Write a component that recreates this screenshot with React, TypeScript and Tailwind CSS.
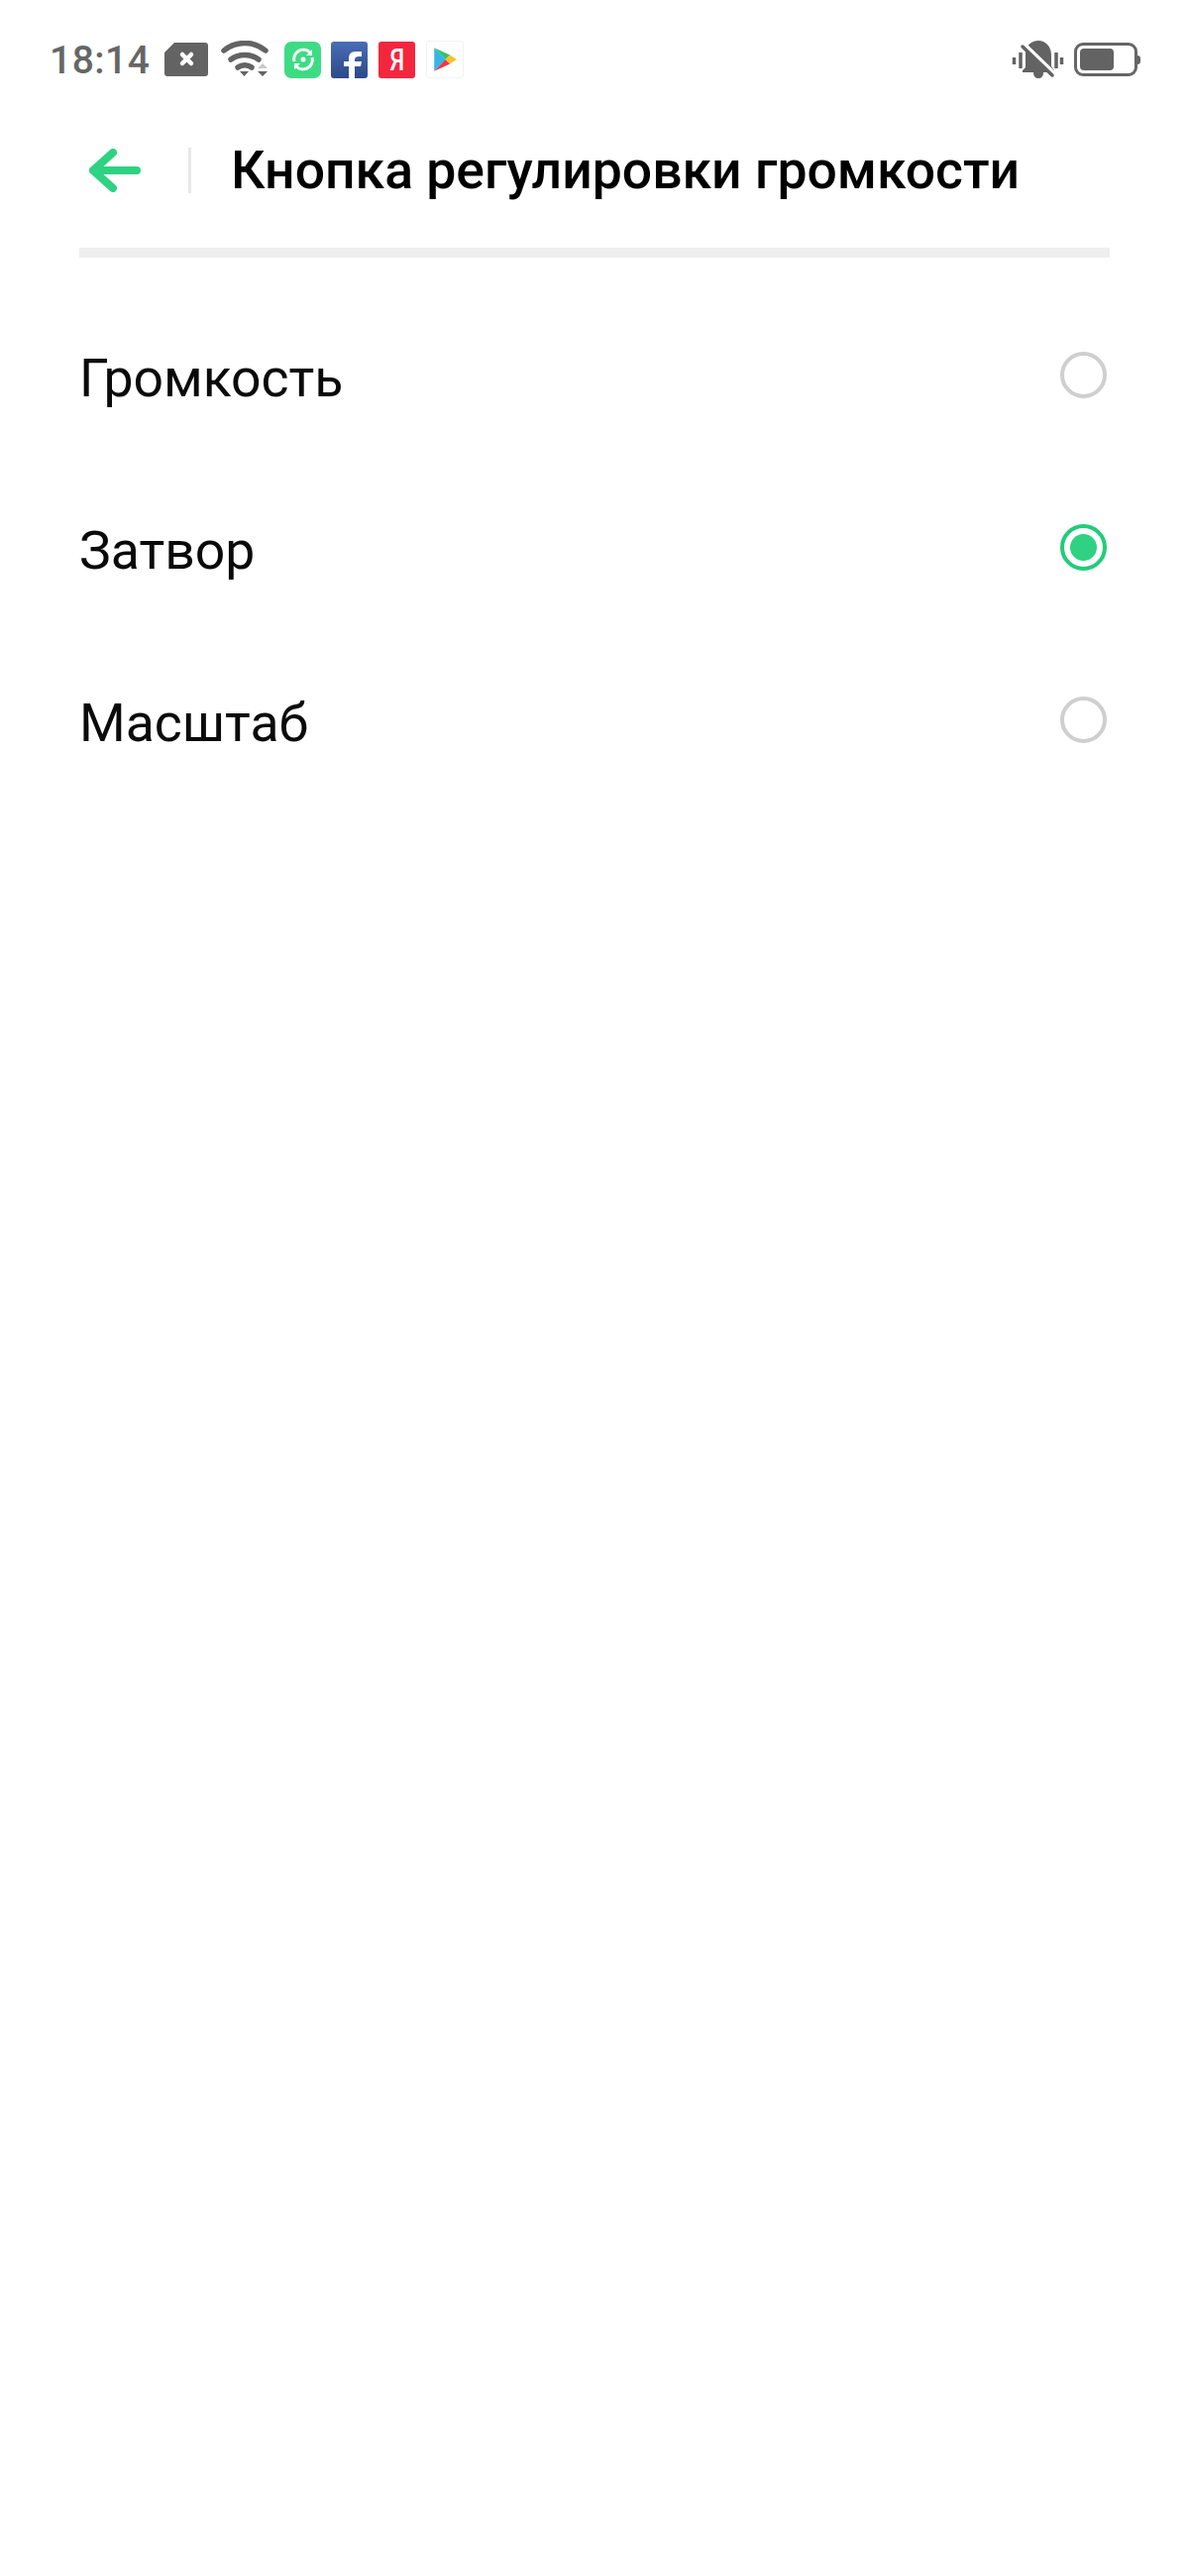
import React from 'react';

const font = { fontFamily: 'Roboto, "Noto Sans", sans-serif' };

const StatusBar = () => (
  <div className="flex h-[80px] items-center justify-between pl-[50px] pr-[49px] pt-[40px]">
    <div className="flex items-center">
      <span className="pt-[1px] text-[39px] leading-[42px] font-medium tracking-[0.5px] text-[#666666]">18:14</span>
      <svg width="44" height="34" viewBox="0 0 44 34" className="ml-[15px]">
        <path d="M10 0h31a3 3 0 0 1 3 3v28a3 3 0 0 1-3 3H3a3 3 0 0 1-3-3V10z" fill="#636363" />
        <path d="M18 12l9 9M27 12l-9 9" stroke="#fff" strokeWidth="4.5" strokeLinecap="round" />
      </svg>
      <svg width="48" height="38" viewBox="0 0 48 38" className="ml-[13px]">
        <g fill="none" stroke="#636363" strokeWidth="5.500" strokeLinecap="round">
          <path d="M3 10C15 0 33 0 45 10" />
          <path d="M10 19c8-6 20-6 28 0" />
          <path d="M17 27c4-3 10-3 14 0" />
        </g>
        <path d="M19 31h9l-4.500 5z" fill="#636363" />
        <path d="M37 28l5-5 5 5z" fill="#c8c8c8" />
        <path d="M37 31h10l-5 5z" fill="#636363" />
      </svg>
      <div className="ml-[16px] flex h-[37px] w-[37px] items-center justify-center rounded-[7px] bg-[#3ddc84]">
        <svg width="26" height="26" viewBox="0 0 26 26" fill="none">
          <path d="M4 15A9.500 9.500 0 0 1 20 6" stroke="#fff" strokeWidth="3" />
          <path d="M22 11A9.500 9.500 0 0 1 6 20" stroke="#fff" strokeWidth="3" />
          <path d="M22 3v6h-6zM4 23v-6h6z" fill="#fff" />
          <circle cx="13" cy="13" r="2.500" fill="#fff" />
        </svg>
      </div>
      <div className="ml-[10px] flex h-[37px] w-[37px] items-end justify-end overflow-hidden rounded-[3px] bg-gradient-to-b from-[#4a6db5] to-[#2c4a88] pr-[6px]">
        <svg width="18" height="27" viewBox="0 0 18 27">
          <path d="M5 27V15H0v-5h5V7c0-4 2-7 7-7h6v5h-3c-2 0-4 1-4 3v2h7l-1 5h-6v12z" fill="#fff" />
        </svg>
      </div>
      <div className="ml-[11px] flex h-[37px] w-[37px] items-center justify-center rounded-[3px] bg-[#f4263e] text-white">
        <span className="scale-x-75 text-[32px] leading-none font-medium">Я</span>
      </div>
      <div className="ml-[11px] flex h-[38px] w-[38px] items-center justify-center rounded-[3px] border border-[#f3f3f3] bg-white">
        <svg width="24" height="26" viewBox="0 0 21 23">
          <path d="M1 1v21l10-10.500z" fill="#36b5e8" />
          <path d="M1 1l10 10.500 4-4z" fill="#34c26e" />
          <path d="M1 22l10-10.500 4 4z" fill="#e8384a" />
          <path d="M15 7.500l6 4-6 4-4-4z" fill="#fbc02d" />
        </svg>
      </div>
    </div>
    <div className="flex items-center">
      <svg width="54" height="40" viewBox="0 0 54 40">
        <path d="M27 1c7 0 13 6 13 14v12l3 4v2H11v-2l3-3V14C14 6 20 1 27 1z" fill="#636363" />
        <path d="M22 33h10c0 4-2 6-5 6s-5-2-5-6z" fill="#636363" />
        <path d="M13 5l30 29" stroke="#fff" strokeWidth="4" />
        <path d="M11 7l30 29" stroke="#636363" strokeWidth="3.500" strokeLinecap="round" />
        <path d="M2.500 18v7M9 13v16M45 13v16M50.500 18v7" stroke="#636363" strokeWidth="3.500" />
      </svg>
      <div className="ml-[9px] flex items-center">
        <div className="flex h-[34px] w-[64px] items-center rounded-[9px] border-[3px] border-[#666666] p-[3px]">
          <div className="h-full w-[34px] rounded-[4px] bg-[#636363]" />
        </div>
        <div className="h-[9px] w-[3px] rounded-r-full bg-[#666666]" />
      </div>
    </div>
  </div>
);

const Header = () => (
  <div className="flex h-[170px] items-center pl-[90px] pt-[14px]">
    <svg width="52" height="44" viewBox="0 0 52 44" fill="none">
      <path
        d="M24 4L4 22l20 18M4 22h44"
        stroke="#2ed282"
        strokeWidth="8"
        strokeLinecap="round"
        strokeLinejoin="round"
      />
    </svg>
    <div className="ml-[48px] h-[46px] w-[3px] bg-[#e8e8e8]" />
    <h1 className="ml-[40px] text-[53.500px] leading-[60px] font-medium text-black">Кнопка регулировки громкости</h1>
  </div>
);

const Option = ({ label, checked }: { label: string; checked?: boolean }) => (
  <div className="flex h-[174px] items-center justify-between pr-[3px]">
    <span className="pt-[3px] text-[53.500px] leading-[60px] text-[#0a0a0a]">{label}</span>
    {checked ? (
      <div className="mb-[4px] flex h-[47px] w-[47px] items-center justify-center rounded-full border-[4px] border-[#22cc7a]">
        <div className="h-[27px] w-[27px] rounded-full bg-[#2ed282]" />
      </div>
    ) : (
      <div className="mb-[4px] h-[47px] w-[47px] rounded-full border-[4px] border-[#cfcfcf]" />
    )}
  </div>
);

export default function App() {
  return (
    <div className="h-[2600px] w-[1200px] bg-white" style={font}>
      <StatusBar />
      <Header />
      <div className="mx-[80px]">
        <div className="h-[10px] bg-[#eeeeee]" />
        <div className="mt-[33px]">
          <Option label="Громкость" />
          <Option label="Затвор" checked />
          <Option label="Масштаб" />
        </div>
      </div>
    </div>
  );
}
